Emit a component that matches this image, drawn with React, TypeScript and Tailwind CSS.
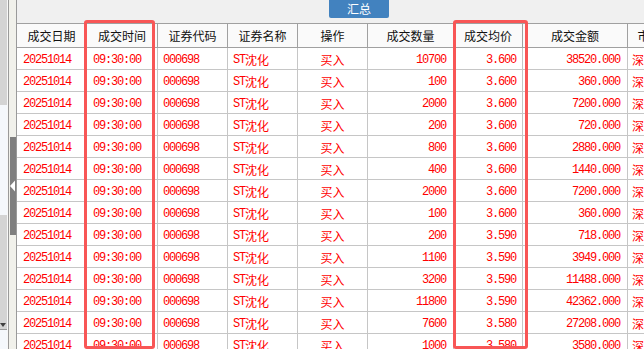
const COLS = [
  { title: "成交日期", w: "w-[70px]", cell: "justify-start pl-[6px]" },
  { title: "成交时间", w: "w-[71px]", cell: "justify-start pl-[6px]" },
  { title: "证券代码", w: "w-[70px]", cell: "justify-start pl-[5px]" },
  { title: "证券名称", w: "w-[70px]", cell: "justify-start pl-[5px]" },
  { title: "操作", w: "w-[70px]", cell: "justify-center" },
  { title: "成交数量", w: "w-[86px]", cell: "justify-end pr-[7px]" },
  { title: "成交均价", w: "w-[69px]", cell: "justify-end pr-[6px]" },
  { title: "成交金额", w: "w-[105px]", cell: "justify-end pr-[7px]" },
  { title: "市场名称", w: "w-[68px]", cell: "justify-start pl-[4px]" },
];

const TRADES: [string, string, string][] = [
  ["10700", "3.600", "38520.000"],
  ["100", "3.600", "360.000"],
  ["2000", "3.600", "7200.000"],
  ["200", "3.600", "720.000"],
  ["800", "3.600", "2880.000"],
  ["400", "3.600", "1440.000"],
  ["2000", "3.600", "7200.000"],
  ["100", "3.600", "360.000"],
  ["200", "3.590", "718.000"],
  ["1100", "3.590", "3949.000"],
  ["3200", "3.590", "11488.000"],
  ["11800", "3.590", "42362.000"],
  ["7600", "3.580", "27208.000"],
  ["1000", "3.580", "3580.000"],
];

const cjk = "tracking-normal [font-family:'Noto_Sans_CJK_SC',sans-serif]";

function Row({ qty, price, amount }: { qty: string; price: string; amount: string }) {
  const values = [
    "20251014",
    "09:30:00",
    "000698",
    <>
      ST<span className={cjk}>沈化</span>
    </>,
    <span className={cjk}>买入</span>,
    qty,
    price,
    amount,
    <span className={cjk}>深圳A股</span>,
  ];
  return (
    <div className="flex h-[22px] shrink-0 border-b border-[#c6c6c6] bg-white">
      {COLS.map((c, i) => (
        <div
          key={i}
          className={`${c.w} ${c.cell} flex shrink-0 items-center overflow-hidden whitespace-nowrap border-r border-[#c6c6c6] pt-[2px]`}
        >
          {values[i]}
        </div>
      ))}
    </div>
  );
}

export default function App() {
  return (
    <div className="relative flex h-[349px] w-[644px] overflow-hidden bg-[#f0f0f0]">
      {/* left dock strip */}
      <div className="flex w-[8px] shrink-0 flex-col border-r border-[#f8f8f8]">
        <div className="h-[105px] bg-[#d4d4d4]" />
        <div className="h-[110px] bg-[#f5f8fc]" />
        <div className="flex h-[115px] flex-col justify-end border-b border-[#9a9a9a] bg-[#d4d4d4] pb-[1px]">
          <svg width="7" height="5" viewBox="0 0 7 5">
            <path d="M0 0 L6 0 L3 4 Z" fill="#404040" />
          </svg>
        </div>
        <div className="flex-1 bg-[#f5f8fc]" />
      </div>

      {/* splitter */}
      <div className="flex w-[9px] shrink-0 flex-col border-x border-[#9a9a9a] bg-[#f1f1eb]">
        <div className="mt-[137px] ml-[1px] flex h-[98px] w-[6px] items-center bg-[#7f7f7f]">
          <svg width="6" height="12" viewBox="0 0 6 12">
            <path d="M0 6 L5 0.5 L5 11.5 Z" fill="#ffffff" />
          </svg>
        </div>
      </div>

      {/* grid */}
      <div className="flex min-w-0 flex-1 flex-col">
        <div className="flex h-[23px] shrink-0 items-start pl-[312px]">
          <div className="flex h-[18px] w-[60px] items-center justify-center rounded-b-[2px] bg-[#4282bf] text-[12px] text-white [font-family:'Noto_Sans_CJK_SC',sans-serif]">
            汇总
          </div>
        </div>
        <div className="flex h-[25px] shrink-0 border-y border-[#a0a0a0] bg-[#fafafa] text-[12px] text-[#111] [font-family:'Noto_Sans_CJK_SC',sans-serif]">
          {COLS.map((c) => (
            <div
              key={c.title}
              className={`${c.w} flex shrink-0 items-center justify-center overflow-hidden whitespace-nowrap border-r border-[#a0a0a0]`}
            >
              {c.title}
            </div>
          ))}
        </div>
        <div className="flex flex-col text-[12px] tracking-[-1.2px] text-[#ff0000] [font-family:'Liberation_Mono',monospace]">
          {TRADES.map(([q, p, a], i) => (
            <Row key={i} qty={q} price={p} amount={a} />
          ))}
        </div>
      </div>

      {/* highlight boxes */}
      <div className="absolute left-[84px] top-[20px] h-[329px] w-[71px] rounded-[3px] border-[3px] border-[#f85656]" />
      <div className="absolute left-[453px] top-[20px] h-[329px] w-[75px] rounded-[3px] border-[3px] border-[#f85656]" />
    </div>
  );
}
